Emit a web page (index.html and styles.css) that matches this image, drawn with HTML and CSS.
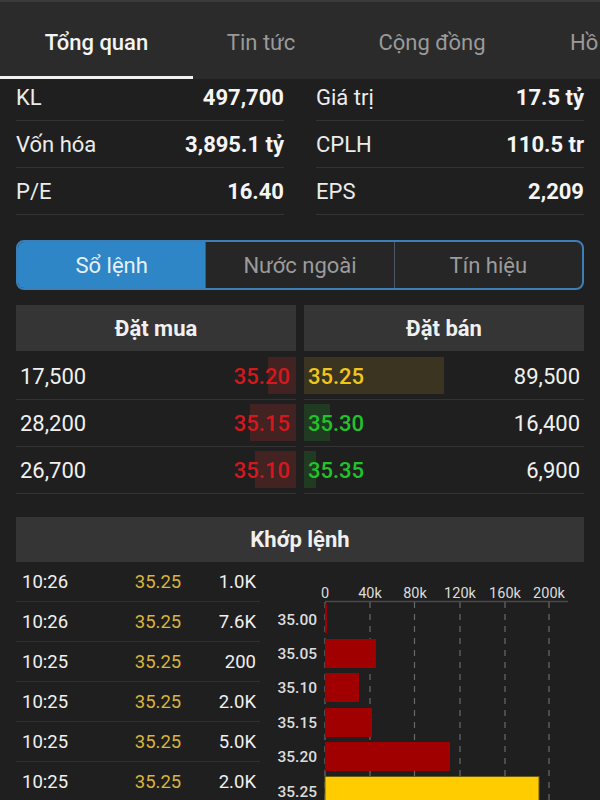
FILE: index.html
```html
<!DOCTYPE html>
<html lang="vi">
<head>
    <meta charset="UTF-8">
    <meta name="viewport" content="width=device-width, initial-scale=1.0">
    <title>Tổng quan</title>
    <link rel="stylesheet" href="styles.css">
</head>
<body>
    <!-- Top tabs -->
    <nav class="tabs">
        <div class="tab tab-overview active">Tổng quan</div>
        <div class="tab tab-news">Tin tức</div>
        <div class="tab tab-community">Cộng đồng</div>
        <div class="tab tab-profile">Hồ sơ</div>
    </nav>

    <!-- Key figures -->
    <section class="stats">
        <div class="stat"><span>KL</span><span class="stat-value">497,700</span></div>
        <div class="stat"><span>Giá trị</span><span class="stat-value">17.5 tỷ</span></div>
        <div class="stat"><span>Vốn hóa</span><span class="stat-value">3,895.1 tỷ</span></div>
        <div class="stat"><span>CPLH</span><span class="stat-value">110.5 tr</span></div>
        <div class="stat"><span>P/E</span><span class="stat-value">16.40</span></div>
        <div class="stat"><span>EPS</span><span class="stat-value">2,209</span></div>
    </section>

    <div class="segments">
        <div class="segment active">Sổ lệnh</div>
        <div class="segment">Nước ngoài</div>
        <div class="segment">Tín hiệu</div>
    </div>

    <!-- Order book -->
    <section class="book">
        <div class="book-head">Đặt mua</div>
        <div class="book-head">Đặt bán</div>

        <div class="book-row buy">
            <span class="depth depth-red" style="width:28px"></span>
            <span class="qty">17,500</span><span class="price red">35.20</span>
        </div>
        <div class="book-row sell">
            <span class="depth depth-yellow" style="width:140px"></span>
            <span class="price yellow">35.25</span><span class="qty">89,500</span>
        </div>

        <div class="book-row buy">
            <span class="depth depth-red" style="width:46px"></span>
            <span class="qty">28,200</span><span class="price red">35.15</span>
        </div>
        <div class="book-row sell">
            <span class="depth depth-green" style="width:26px"></span>
            <span class="price green">35.30</span><span class="qty">16,400</span>
        </div>

        <div class="book-row buy">
            <span class="depth depth-red" style="width:41px"></span>
            <span class="qty">26,700</span><span class="price red">35.10</span>
        </div>
        <div class="book-row sell">
            <span class="depth depth-green" style="width:12px"></span>
            <span class="price green">35.35</span><span class="qty">6,900</span>
        </div>
    </section>

    <!-- Matched orders -->
    <div class="match-head">Khớp lệnh</div>
    <section class="match">
        <div class="trades">
            <div class="trade"><span>10:26</span><span class="trade-price">35.25</span><span class="trade-vol">1.0K</span></div>
            <div class="trade"><span>10:26</span><span class="trade-price">35.25</span><span class="trade-vol">7.6K</span></div>
            <div class="trade"><span>10:25</span><span class="trade-price">35.25</span><span class="trade-vol">200</span></div>
            <div class="trade"><span>10:25</span><span class="trade-price">35.25</span><span class="trade-vol">2.0K</span></div>
            <div class="trade"><span>10:25</span><span class="trade-price">35.25</span><span class="trade-vol">5.0K</span></div>
            <div class="trade"><span>10:25</span><span class="trade-price">35.25</span><span class="trade-vol">2.0K</span></div>
        </div>

        <svg class="chart" width="340" height="238" viewBox="260 562 340 238">
            <g class="axis-labels" text-anchor="middle">
                <text x="325" y="598">0</text>
                <text x="370" y="598">40k</text>
                <text x="415" y="598">80k</text>
                <text x="460" y="598">120k</text>
                <text x="505" y="598">160k</text>
                <text x="549" y="598">200k</text>
            </g>
            <line x1="325" y1="601.5" x2="568" y2="601.5" stroke="#4a4a4a" stroke-width="1.5"/>
            <g stroke="#6a6a6a" stroke-width="1.2" stroke-dasharray="6 6">
                <line x1="325" y1="602" x2="325" y2="800"/>
                <line x1="370" y1="602" x2="370" y2="800"/>
                <line x1="414.5" y1="602" x2="414.5" y2="800"/>
                <line x1="460" y1="602" x2="460" y2="800"/>
                <line x1="505" y1="602" x2="505" y2="800"/>
                <line x1="549" y1="602" x2="549" y2="800"/>
            </g>
            <g fill="#a10000">
                <rect x="325" y="604" width="2" height="29"/>
                <rect x="325" y="639" width="51" height="29"/>
                <rect x="325" y="673" width="34" height="29"/>
                <rect x="325" y="708" width="47" height="29"/>
                <rect x="325" y="742" width="125" height="29"/>
            </g>
            <rect x="325" y="776.5" width="214" height="30" fill="#ffcc00" stroke="#6b5a10" stroke-width="1"/>
            <g class="price-labels" text-anchor="end">
                <text x="317" y="625">35.00</text>
                <text x="317" y="659">35.05</text>
                <text x="317" y="693">35.10</text>
                <text x="317" y="728">35.15</text>
                <text x="317" y="762">35.20</text>
                <text x="317" y="797">35.25</text>
            </g>
        </svg>
    </section>
</body>
</html>
```

FILE: styles.css
```css
* {
    box-sizing: border-box;
}

body {
    margin: 0;
    width: 600px;
    height: 800px;
    overflow: hidden;
    background-color: #1f1f1f;
    color: #f0f0f0;
    font-family: Roboto, "Noto Sans", sans-serif;
}

/* tabs */
.tabs {
    display: flex;
    height: 79px;
    background-color: #2b2b2b;
    border-top: 2px solid #3b3b3b;
    white-space: nowrap;
    overflow: hidden;
}

.tab {
    flex: none;
    display: flex;
    align-items: center;
    justify-content: center;
    padding-top: 6px;
    font-size: 22px;
    color: #9a9a9a;
    border-bottom: 3px solid transparent;
}

.tab.active {
    color: #f4f4f4;
    font-weight: 500;
    border-bottom-color: #f2f2f2;
}

.tab-overview { width: 193px; }
.tab-news { width: 136px; }
.tab-community { width: 206px; }
.tab-profile {
    width: 65px;
    justify-content: flex-start;
    padding-left: 35px;
    overflow: hidden;
}

/* key figures */
.stats {
    display: grid;
    grid-template-columns: 268px 268px;
    column-gap: 32px;
    padding: 0 16px;
    margin-top: -5px;
}

.stat {
    display: flex;
    justify-content: space-between;
    align-items: center;
    height: 47px;
    border-bottom: 1px solid #333;
    font-size: 22px;
    color: #ececec;
}

.stat-value {
    font-weight: 700;
    color: #f5f5f5;
}

/* segmented control */
.segments {
    display: flex;
    height: 50px;
    margin: 25px 16px 0;
    border: 2px solid #3a7fb8;
    border-radius: 8px;
    overflow: hidden;
    background-color: #262626;
}

.segment {
    flex: 1;
    display: flex;
    align-items: center;
    justify-content: center;
    font-size: 22px;
    color: #9b9b9b;
    border-left: 1px solid #4d5864;
}

.segment:first-child {
    border-left: none;
}

.segment.active {
    background-color: #2f86c7;
    color: #e8f0f7;
}

/* order book */
.book {
    display: grid;
    grid-template-columns: 1fr 1fr;
    column-gap: 8px;
    margin: 15px 16px 0;
}

.book-head {
    height: 46px;
    margin-bottom: 2px;
    display: flex;
    align-items: center;
    justify-content: center;
    background-color: #353535;
    font-size: 22px;
    font-weight: 700;
}

.book-row {
    position: relative;
    height: 47px;
    display: flex;
    align-items: center;
    justify-content: space-between;
    border-bottom: 1px solid #333;
    font-size: 22px;
}

.book-row span {
    position: relative;
}

.buy { padding: 0 6px 0 4px; }
.sell { padding: 0 4px 0 4px; }

.book-row .depth {
    position: absolute;
    top: 4px;
    bottom: 5px;
}

.buy .depth { right: 0; }
.sell .depth { left: 0; }

.depth-red { background-color: #432222; }
.depth-yellow { background-color: #3a3421; }
.depth-green { background-color: #213a22; }

.price { font-weight: 500; }
.red { color: #d4181e; }
.yellow { color: #f1c51b; }
.green { color: #20c42a; }

/* matched orders */
.match-head {
    height: 45px;
    margin: 23px 16px 0;
    display: flex;
    align-items: center;
    justify-content: center;
    background-color: #353535;
    font-size: 22px;
    font-weight: 700;
}

.match {
    display: flex;
    margin-left: 16px;
}

.trades {
    width: 244px;
    flex: none;
}

.trade {
    display: grid;
    grid-template-columns: 100px 72px 1fr;
    align-items: center;
    height: 40px;
    padding: 0 4px 0 6px;
    border-bottom: 1px solid #303030;
    font-size: 18.5px;
}

.trade-price {
    text-align: center;
    color: #d9b43a;
}

.trade-vol {
    text-align: right;
}

.chart {
    display: block;
    flex: none;
    font-family: Roboto, "Noto Sans", sans-serif;
}

.axis-labels text {
    font-size: 14.5px;
    fill: #dcdcdc;
}

.price-labels text {
    font-size: 15.5px;
    fill: #dcdcdc;
    font-weight: 500;
}
```
